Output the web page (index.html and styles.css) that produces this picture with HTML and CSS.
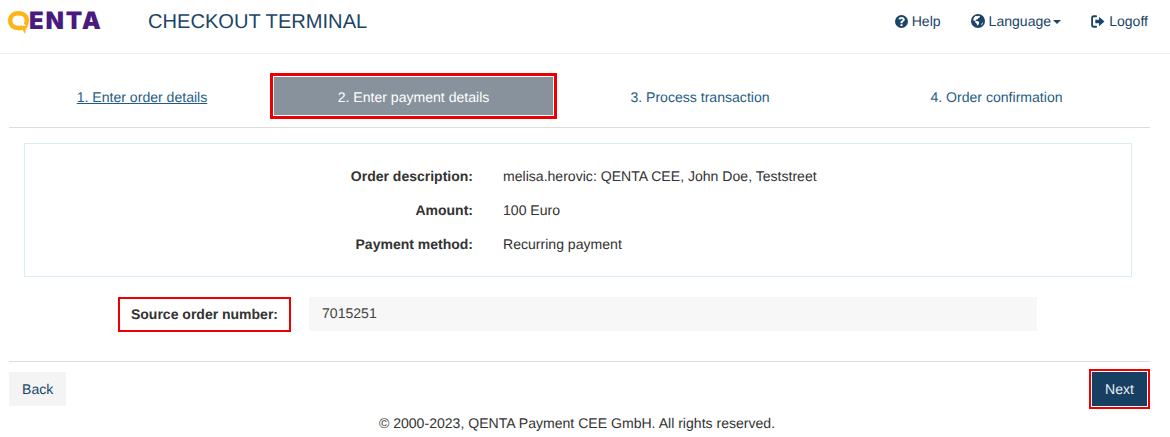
FILE: index.html
```html
<!DOCTYPE html>
<html lang="en">
<head>
<meta charset="utf-8">
<title>Checkout Terminal</title>
<link rel="stylesheet" href="styles.css">
</head>
<body>
<header class="topbar">
  <div class="brand">
    <span class="logo">
      <svg class="logo-q" width="22" height="23" viewBox="0 0 22 23"><path fill="none" stroke="#fdb515" stroke-width="4.400" stroke-linecap="butt" d="M14 17H10.500C5.500 17 2.200 14.200 2.200 9.500 2.200 4.800 5.500 2.200 10.500 2.200S18.800 4.800 18.800 9.500C18.800 11.500 18.300 13 17.300 14"/><path fill="#fdb515" d="M12 14.800h8.500l-2.800 3.500-.6 4.700z"/></svg><span class="logo-text">ENTA</span>
    </span>
    <span class="title">CHECKOUT TERMINAL</span>
  </div>
  <nav class="topnav">
    <a class="navlink">
      <svg class="ico" width="13" height="13" viewBox="0 0 24 24"><path fill="#1b4568" fill-rule="evenodd" d="M12 0a12 12 0 1 0 0 24 12 12 0 0 0 0-24zm-1.900 17h3.800v3.400h-3.800zM12 3.600c3.400 0 6 2 6 4.900 0 2-1.200 3.100-2.500 4-.9.600-1.600 1.200-1.600 2.200v.5h-3.800v-.8c0-2.100 1.100-3.200 2.400-4.100.9-.6 1.700-1.100 1.700-2 0-.9-.8-1.400-1.900-1.400-1.200 0-2.100.7-2.700 1.800L6.300 6.900C7.400 4.900 9.400 3.600 12 3.600z"/></svg>Help</a>
    <a class="navlink">
      <svg class="ico" width="14" height="14" viewBox="0 0 24 24"><path fill="#1b4568" fill-rule="evenodd" d="M12 0a12 12 0 1 0 0 24 12 12 0 0 0 0-24zM8 3.200l2.600.8 2.200-1 2.600 1-.6 2.200-2.300.7-.8 2-2.400.6L7.400 11l2.200 1.100 2.900.4 1.700 2.300-1.300 3-1.900 2.300-1.200-3.300-2.200-2-.2-2.300L3.800 10.500 4.500 7zM19 14.500l1.300.5-1.200 3.300-1.500 1.100z"/></svg>Language<i class="caret"></i></a>
    <a class="navlink">
      <svg class="ico" width="14" height="13" viewBox="0 0 26 22" preserveAspectRatio="none"><path fill="none" stroke="#1b4568" stroke-width="3.400" stroke-linecap="round" d="M9.500 2H5a3 3 0 0 0-3 3v12a3 3 0 0 0 3 3h4.500"/><path fill="#1b4568" d="M8 8h7V3l10 8-10 8v-5H8z"/></svg>Logoff</a>
  </nav>
</header>

<main class="content">
  <ol class="steps">
    <li class="step first"><a class="step-link done">1. Enter order details</a></li>
    <li class="step"><a class="step-link active">2. Enter payment details</a></li>
    <li class="step"><a class="step-link">3. Process transaction</a></li>
    <li class="step"><a class="step-link">4. Order confirmation</a></li>
  </ol>

  <section class="summary">
    <div class="row"><div class="key">Order description:</div><div class="val">melisa.herovic: QENTA CEE, John Doe, Teststreet</div></div>
    <div class="row"><div class="key">Amount:</div><div class="val">100 Euro</div></div>
    <div class="row"><div class="key">Payment method:</div><div class="val">Recurring payment</div></div>
  </section>

  <div class="field">
    <div class="field-label-col"><label class="field-label">Source order number:</label></div>
    <div class="field-value">7015251</div>
  </div>

  <div class="actions">
    <button class="btn back">Back</button>
    <span class="next-wrap"><button class="btn next">Next</button></span>
  </div>
  <footer class="copy">© 2000-2023, QENTA Payment CEE GmbH. All rights reserved.</footer>
</main>
</body>
</html>
```
FILE: styles.css
```css
* { box-sizing: border-box; }
html, body { margin: 0; padding: 0; }
body {
  width: 1170px;
  height: 437px;
  overflow: hidden;
  background: #fff;
  color: #333;
  font: 14.070px/20px "Liberation Sans", Arial, sans-serif;
  text-rendering: geometricPrecision;
}
.topbar {
  height: 54px;
  border-bottom: 1px solid #eee;
  display: flex;
  justify-content: space-between;
  padding: 0 22px 0 8px;
}
.brand { display: flex; align-items: flex-start; }
.logo { width: 140px; display: flex; align-items: flex-start; padding-top: 11px; }
.logo-q { flex: none; margin-right: -1px; }
.logo-text {
  font: 900 24px/20px Inter, sans-serif;
  color: #4a1a7f;
  letter-spacing: 1.800px;
}
.title { font-size: 20.100px; line-height: 22px; color: #1b4568; padding-top: 11px; }
.topnav { display: flex; gap: 30px; padding-top: 11px; }
.navlink { color: #1b4568; display: flex; align-items: center; height: 20px; }
.ico { margin-right: 4px; flex: none; }
.caret {
  margin-left: 2px; margin-top: 2px;
  border-top: 4px solid #1b4568;
  border-left: 4px solid transparent;
  border-right: 4px solid transparent;
}
.content { padding: 0 20px 0 9px; }
.steps {
  list-style: none;
  margin: 19px 0 0;
  padding: 0;
  height: 55px;
  display: grid;
  grid-template-columns: 261px 287px 286px 1fr;
  border-bottom: 1px solid #ddd;
  width: 1141px;
}
.step { display: flex; justify-content: center; height: 46px; }
.first { padding-left: 5px; }
.step-link { color: #1f5d85; display: flex; align-items: center; justify-content: center; padding-top: 2px; }
.done { text-decoration: underline; }
.active {
  width: 287px;
  height: 46px;
  background: #88929c;
  color: #fff;
  border: 2px solid #fff;
  outline: 3px solid #e00;
  outline-offset: -3px;
  box-shadow: inset 0 0 0 2px #fff;
}
.summary {
  margin: 15px 0 0 15px;
  width: 1108px;
  height: 134px;
  border: 1px solid #d9edf7;
  padding-top: 22px;
}
.row { display: flex; height: 34px; }
.key { width: 448px; text-align: right; font-weight: 700; font-size: 14px; }
.val { margin-left: 30px; }
.field { display: flex; margin-top: 20px; height: 34px; }
.field-label-col { width: 282px; display: flex; justify-content: flex-end; }
.field-label {
  width: 173px; height: 35px;
  border: 2px solid #e00;
  padding-bottom: 2px;
  font-weight: 700;
  font-size: 14px;
  display: flex; align-items: center; justify-content: center;
}
.field-value {
  margin-left: 18px;
  width: 728px; height: 34px;
  background: #f7f7f7;
  padding: 6px 13px;
  color: #444;
}
.actions {
  margin-top: 30px;
  width: 1141px;
  border-top: 1px solid #ddd;
  padding-top: 10px;
  display: flex;
  justify-content: space-between;
}
.btn { font: 14.070px/20px "Liberation Sans", Arial, sans-serif; text-rendering: geometricPrecision; border: 0; height: 34px; padding: 0 13px; }
.back { background: #f4f4f4; color: #1b4568; width: 57px; }
.next-wrap { border: 2px solid #e00; margin-top: -3px; height: 40px; padding: 1px; }
.next { background: #173f62; color: #e6edf3; width: 55px; display: block; }
.copy { text-align: center; width: 1136px; margin-top: 4px; }
```
